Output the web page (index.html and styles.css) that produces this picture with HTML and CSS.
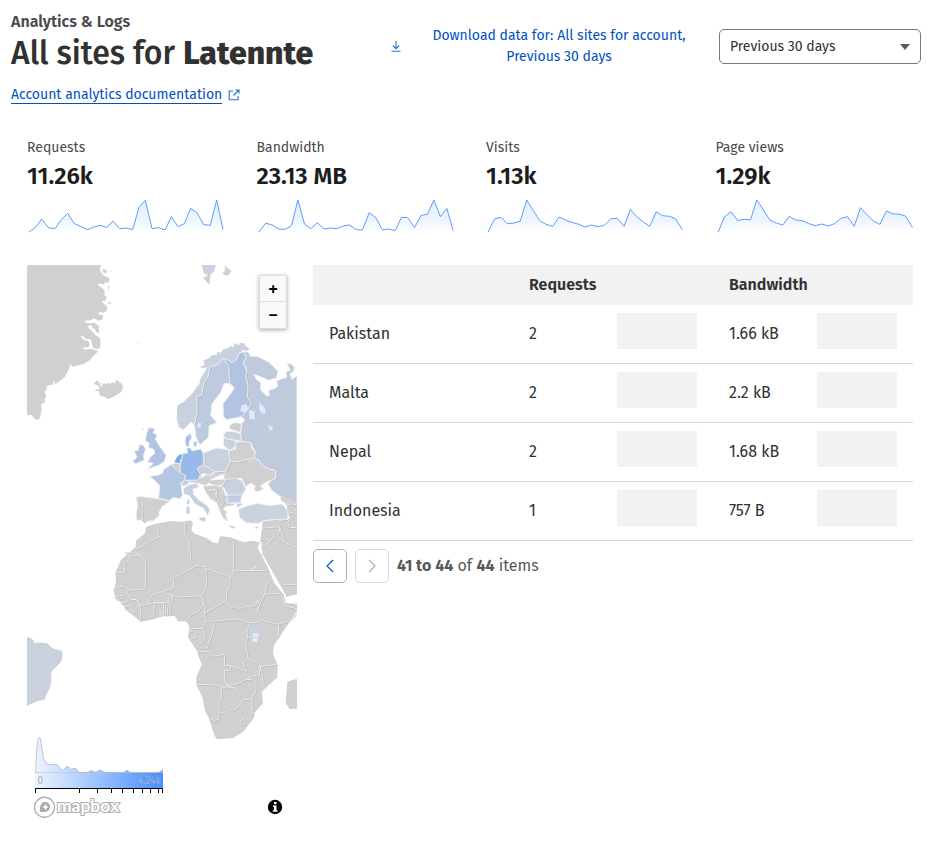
FILE: index.html
```html
<!DOCTYPE html>
<html lang="en">
<head>
<meta charset="utf-8">
<title>Analytics</title>
<link rel="stylesheet" href="styles.css">
</head>
<body>
<header class="top">
  <div class="titles">
    <div class="eyebrow"><span>Analytics &amp; Logs</span></div>
    <h1><span class="site">All sites for </span><b>Latennte</b></h1>
    <a class="doc"><span>Account analytics documentation</span><svg width="12" height="12" viewBox="0 0 12 12"><path d="M5 2H1.2v8.8H10V7M7.3 1H11v3.7M11 1 5.5 6.5"/></svg></a>
  </div>
  <div class="download"><svg width="10" height="11" viewBox="0 0 10 11"><path d="M5 0v7.5M1.8 4.5 5 7.7l3.2-3.2M.5 10.2h9"/></svg><div><span class="l1">Download data for: All sites for account,</span><br><span class="l2">Previous 30 days</span></div></div>
  <div class="select"><span>Previous 30 days</span><i></i></div>
</header>
<main>
  <svg class="defs" width="0" height="0"><defs>
    <linearGradient id="area" x1="0" y1="0" x2="0" y2="1"><stop offset="0" stop-color="#e3eefe"/><stop offset=".6" stop-color="#edf4ff"/><stop offset="1" stop-color="#fff"/></linearGradient>
  </defs></svg>
  <section class="cards">
    <div class="card"><div class="label"><span>Requests</span></div><div class="value"><span>11.26k</span></div>
      <svg viewBox="51 204 600 108"><path class="line" d="M57 306 76 293 95 267 115 293 135 296 154 269 173 250 193 281 212 289 232 299 251 291 270 286 290 292 309 273 329 296 348 294 368 299 387 232 406 211 426 296 445 293 465 300 484 260 504 290 523 281 542 235 561 248 581 284 601 286 620 210 639 299"/></svg></div>
    <div class="card"><div class="label"><span>Bandwidth</span></div><div class="value"><span>23.13 MB</span></div>
      <svg viewBox="35.5 204 600 108"><path class="line" d="M41 307 61 280 80 284 100 297 120 298 139 287 158 210 178 282 197 296 217 278 236 297 256 294 275 296 294 288 313 285 333 299 352 300 372 248 392 263 411 299 430 297 450 302 469 262 488 263 508 293 527 257 547 252 566 210 586 260 605 235 624 302"/></svg></div>
    <div class="card"><div class="label"><span>Visits</span></div><div class="value"><span>1.13k</span></div>
      <svg viewBox="33 204 600 108"><path class="line" d="M39 306 59 266 78 262 97 281 117 279 136 273 155 210 175 242 194 272 213 283 233 289 252 261 272 270 291 277 311 283 330 291 350 285 369 290 388 286 408 266 427 265 447 289 466 238 485 260 505 276 524 289 544 245 562 257 584 259 601 266 622 299"/></svg></div>
    <div class="card"><div class="label"><span>Page views</span></div><div class="value"><span>1.29k</span></div>
      <svg viewBox="32.5 204 600 108"><path class="line" d="M39 306 58 260 78 245 97 271 117 268 136 269 155 210 175 240 194 270 213 279 233 285 252 259 272 270 291 272 311 281 330 287 350 282 369 288 388 281 408 265 427 260 447 289 466 233 485 254 505 273 524 283 544 243 562 251 584 253 601 258 622 293"/></svg></div>
  </section>
  <section class="content">
    <div class="map">
      <svg class="world" width="270" height="560" viewBox="27 265 270 560">
        <g transform="translate(20 260) scale(.33333)" class="g">
          <path d="M21 14H243L240 30 248 45 268 55 266 70 258 66 250 74 240 70 233 75 247 85 254 92 253 105 260 112 256 122 245 123 252 132 262 141 260 153 250 158 238 156 235 162 250 167 248 178 236 182 222 175 212 181 194 182 200 189 213 189 224 188 237 199 237 222 230 217 224 207 215 202 215 195 204 198 208 207 217 214 225 224 241 234V264L228 268 218 262 213 239 205 236 199 238 185 225 183 230 190 239 206 244 209 259 202 262 187 263 195 269 212 266 235 273 210 300 190 312 158 320 150 311 149 323 143 333 135 351 119 364 105 373 102 360 98 374 86 375 78 380 83 384 74 396 80 408 74 415 76 427 63 433 65 450 60 474 52 481 41 474 34 464 21 466ZM247 27 261 30 259 39 250 38ZM265 124 276 130 267 133ZM273 30 275 36 271 34ZM190 250 203 247 206 257 192 260ZM264 76 268 80 265 96Z"/>
          <path d="M221 371 232 360 236 368 242 370 241 378 247 380 248 370 258 372 263 368 270 372 278 367 286 370 288 357 296 365 304 369 309 380 304 396 285 408 265 417 252 410 239 407 237 394 220 391 240 387 236 378ZM350 253 357 245 354 251Z"/>
          <path fill="#b5c8e6" d="M368 508 372 505 372 510ZM384 505 400 503 392 512 382 511Z"/>
        </g>
        <g transform="translate(120 420) scale(.33333)">
          <g fill="#c8d1de">
            <path d="M245-465H288L281-444 272-438 268-406 258-417 249-426 264-435 251-440ZM314-465 322-456 335-448 324-433 314-435 307-440 316-450Z"/>
            <path d="M172-43 184-51 192-55 215-78 228-95 238-108 240-120 248-134 254-145 262-158 250-156 238-158 254-165 250-178 268-186 275-194 290-196 292-205 302-202 311-213 322-215 334-223 338-216 345-231 355-224 360-230 372-231 377-221 389-214 382-208 370-210 358-201 348-180 336-172 327-179 307-185 296-169 285-164 270-160 264-130 250-106 246-75 230-70 231-22 223 15 214 5 190 29 177 21 170-4Z"/>
          </g>
          <path class="b" fill="#becade" d="M270-160 285-164 296-169 307-185 319-171 326-160 330-110 313-110 303-84 276-49 272-14 291 8 267 18 266 51 240 75 228 52 223 15 231-22 230-70 246-75 250-106 264-130Z"/>
          <path class="b" fill="#b2c4e1" d="M307-185 327-179 336-172 348-180 358-201 371-205 379-190 371-171 381-147 377-130 384-105 383-68 394-50 383-30 366-10 320-1 310-12 309-49 331-78 343-96 330-110 326-160 319-171Z"/>
          <path class="b" fill="#bfcadc" d="M371-205 385-204 391-192 415-190 447-173 474-146 469-126 447-119 421-130 402-137 409-122 423-112 421-91 440-72 448-73 446-90 463-94 473-102 470-118 500-128 498-145 511-149 501-169 513-169 524-158 520-145 510-139 516-122 531-132V251L480 229 456 212 444 193 454 180 465 176 468 152 449 148 424 135 418 120 404 116 402 104 408 99 393 68 365 64 362 37 366 10 374 1 366-10 383-30 394-50 383-68 384-105 377-130 381-147 371-171 379-190Z"/>
          <path class="e" d="M307-185 319-171 326-160 330-110M381-147 377-130 384-105 383-68 394-50 383-30 366-10M270-160 264-130 250-106 246-75 230-70 231-22 223 15M362 37 365 64 393 68 408 99M404 116 418 120 424 135 449 148 468 152"/>
          <g fill="#dceaff"><path d="M366-44 379-48 385-32 376-20 360-28ZM387-30 403-26 405-1 389-3ZM419-54 428-43 436-36 436-18 425-20 417-34ZM443 16 457 20 459 31 450 32ZM231 12 244 8 242 21 234 25Z"/></g>
          <g class="g">
            <path class="b" d="M328 16 342 8 364 10 362 38 346 32 330 28ZM342 67 365 64 393 68 395 84 408 99 402 104 404 116 392 124 377 118 359 126 330 122V104L328 93 347 86ZM330 123 359 126 377 118 404 116 418 120 424 135 449 148 468 152 465 176 435 188 421 198 432 207 411 216 402 209 406 198 392 190 378 198 366 175 340 176 316 180 310 170 318 155Z"/>
            <path class="b" d="M271 180 290 170 316 161 319 155 285 156 270 167 264 162 250 170 232 180 208 178 205 187 240 191 256 197 266 189 288 199 307 195 318 177Z"/>
            <path class="b" d="M248 198 290 196 306 200 317 225 322 230 321 248 346 250 340 257 321 259 309 265 322 276 317 283 325 304 310 296 302 280 296 264 290 248 270 236 257 217Z"/>
            <path class="b" d="M48 232 60 229 115 236 151 243 126 260 117 277 118 286 100 303 85 303 74 311 64 300 50 301 48 282 53 259Z"/>
            <path class="b" d="M147 136 166 129 180 131 182 144 181 158Z"/>
            <path d="M325 316 348 321 337 326ZM403 323 417 318 410 327ZM480 232 510 234 522 247 531 251V365H420L424 338 432 304 470 298 510 296 503 279 500 252 485 243Z"/>
            <path class="l" d="M62 247 68 248 66 275 67 300M300 201 307 214 306 238 310 250 301 263M280 207 289 211 291 235 299 244M259 213 282 210 289 230M317 228 300 219M366 175 378 198M497 252 511 254 519 269 531 274M507 243 519 254 531 253M504 282 520 276 531 286M504 298 480 301 477 325 460 343 434 347M504 298 511 322 530 340"/>
          </g>
          <g class="b">
            <path fill="#b0c3e2" d="M88 23 106 26 99 38 112 45 106 57 120 80 139 106 132 126 116 136 82 147 100 130 82 126 92 110 105 99 100 87 85 83 88 70 76 62 79 42Z"/>
            <path fill="#b0c3e2" d="M57 74 71 76 77 89 71 103 72 121 47 131 38 124 51 111 42 94 55 91Z"/>
            <path fill="#b3c7e0" d="M153 134 181 158 196 167 194 181 183 190 185 209 188 225 180 237 160 232 149 242 116 235 119 197 104 181 88 169 116 165 129 159 129 149Z"/>
            <path fill="#76a7ef" d="M162 128 168 114 176 104 189 101 188 115 181 121 181 131Z"/>
            <path fill="#98b9ea" d="M189 100 203 99 200 84 212 84 216 93 241 87 249 96 253 134 232 145 242 163 234 180 194 181 197 167 181 158 180 142 183 123Z"/>
            <path fill="#a6c1e8" d="M197 50 212 40 215 53 208 66 207 81 199 79 195 65ZM220 66 232 63 229 78 222 81Z"/>
            <path fill="#c8d1de" d="M250 99 289 84 326 89 330 123 318 155 285 154 250 134ZM311 52 325 58 345 59 347 75 338 88 325 89 310 76ZM232 147 250 137 285 154 268 166 250 160 243 165Z"/>
            <path fill="#c8d1de" d="M318 34 344 35 362 41 365 64 344 60 325 58 309 48ZM182 192 193 181 208 181 206 193 190 199ZM306 196 319 178 349 176 366 182 378 208 365 226 324 225Z"/>
            <path fill="#c0cfe4" d="M321 226 365 226 362 248 321 249Z"/>
            <path fill="#c5cfdd" d="M190 206 209 194 229 190 237 201 219 208 221 223 237 240 262 257 270 269 263 287 250 265 226 253 207 226 192 223ZM235 293 258 291 254 306 240 301Z"/>
            <path fill="#b3c7e0" d="M203 236 209 240 207 254 200 252Z"/><path fill="#c5cfdd" d="M199 259 210 260 209 282 198 281Z"/>
            <path fill="#c9d2dd" d="M356 267 382 257 413 250 449 257 485 252 504 272 503 297 470 298 434 301 416 310 380 309 358 293ZM351 249 370 250 358 261 349 262Z"/>
          </g>
          <path class="e" d="M330 123 359 126 377 118 404 116M328 90 330 123 318 155 285 154 250 134 232 145 242 163 234 180M252 99 253 134M194 181 197 167 181 158M324 225H365M305 200 319 178 349 176"/>
        </g>
        <path d="M27 637 31 638 34 641 34 643.500 37 642.500 47 643 52 648 58 650 62 651 62.500 656 61 662 56 667 52 671 51 673 51.500 681 50 688 47 693 44.500 700 38 701 33 703 27 706Z" fill="#c9d1dc"/>
        <g transform="translate(100 510) scale(.33333)">
          <path class="g" d="M138 51 155 44 210 33 240 35 273 31 279 43 274 57 281 70 318 83 342 99 354 100 361 78 390 82 432 97 455 92 480 97 473 114 502 169 523 219 552 255 555 279 591 281V303L545 371 521 407 519 432 533 465 532 502 485 545 489 580 464 608 461 625 430 665 399 684 352 688 344 679 327 627 314 600 309 568 289 523 289 501 305 464 289 420 264 382 268 348 258 334 235 335 224 318 190 319 154 329 123 335 102 319 77 300 65 279 46 264 41 240 48 216 46 190 63 149 107 111 109 91 135 70ZM562 516 575 511 591 507V596L569 597 557 580Z"/>
          <path class="g" d="M487 35H591V253L560 261 551 244 528 203 487 132 484 90Z"/>
          <g fill="#c9d2de"><path d="M449 344 477 341 484 356 471 373 443 382 444 362Z"/><path d="M450 604 460 603 458 613 450 611Z"/></g>
          <path fill="#e2effb" d="M459 371 476 369 475 387 457 382Z"/><path fill="#ededed" d="M457 382 475 383 471 398 456 392Z"/>
          <path class="l" d="M171 53 177 81 152 92 134 105 115 115M76 128 115 130 220 205 288 167 272 150 268 97 255 75 254 37M115 130V137H88V151L73 161 73 187H46M136 154V237L85 240 81 233 63 229 48 233M136 154 115 131M268 99 275 91M288 167 317 170 320 226 305 260 291 258 245 261 218 257 202 253 187 245 157 255 141 283 120 287 111 269 90 267 83 248 85 240M220 205V236L187 245M317 178 330 179 390 202 400 193V91M400 181H502M390 202V235L381 238 378 271 395 292 406 290 419 296 435 290 453 291 468 284 474 270 478 286 494 252 501 222 508 217M316 292 313 312 317 334 340 333 374 330 417 327 450 339 482 336 487 323 472 305 470 292M305 260 312 270 308 288 297 303 279 312 258 331M378 271 356 287 314 309M316 292 308 279M417 327 387 289M487 323 491 334 536 342 570 332 591 310M478 286 472 305M494 252 537 250 552 270M552 270 555 286 591 297M536 342V381M443 382 486 381 519 411M443 382 437 403 442 433 445 446 471 456 480 463 478 500 489 516 488 496 480 470 530 463M449 344 440 367 443 382M317 336 309 355 271 356 271 364 282 363 288 382 272 388M309 355 315 389 293 407M345 335 336 375 321 414 293 414M294 425H327L335 438 355 437 373 433 374 466 390 467 417 476 436 482 440 486 434 473 430 455 445 446M374 481H391V467M374 481V514L382 525M289 523H330L371 529 398 524 409 523 440 508 461 510 468 517V542L455 567 434 569 406 534 364 533V568H357V627L344 632 331 625M406 534 384 529 374 514M478 495 461 497 440 508M434 569 406 600 388 600 378 610 363 607 357 604M455 567 458 600 450 604 450 613 460 612M419 637 429 627 437 636 429 646 419 637M216 257 219 268 210 287 210 317M205 278 201 318M196 283 196 316M163 278 190 280 190 316M163 278 161 319M116 286 122 303 120 333M44 259 70 257M47 268 70 266M84 275 62 279M75 290 91 287 98 308 106 304M90 270 110 269 120 287M141 283 163 278 205 278 205 266 218 257M540 55 555 97 591 113M550 223H591M484 90 493 86 510 92 527 76 555 97M490 54 540 50 535 76M563 37 568 52 591 53M484 109 500 107 510 92"/>
          <path fill="none" stroke="#eee" stroke-width="2" d="M178 298 184 307 182 314M450 182 468 168 463 176M486 339 496 350"/>
        </g>
      </svg>
      <div class="zoom"><button>+</button><button>−</button></div>
      <svg class="legend" width="270" height="95" viewBox="27 730 270 95">
        <defs><linearGradient id="scale"><stop offset="0" stop-color="#edf4ff"/><stop offset="1" stop-color="#478eff"/></linearGradient><linearGradient id="hist" gradientUnits="userSpaceOnUse" x1="35" y1="0" x2="163" y2="0"><stop offset="0" stop-color="#edf4ff"/><stop offset="1" stop-color="#478eff"/></linearGradient></defs>
        <path d="M35.500 772.500C36 764 37 737.300 39.200 737.300 41.300 737.300 41.500 749 43.300 757 44.500 762 46 763 48.500 764.300 51 765.300 54 764 56.500 764.400 59 765 60 770 62 770.200 64 770.200 65.500 766.700 67.500 766.700 69.500 766.700 69.500 769.400 71.500 769.400 73 769.400 73.500 768.200 75 768.200 77 768.200 77 772.300 80 772.500H87C89.500 772.300 89.500 770.600 91.300 770.600 93 770.600 93 772.200 95 772.200 97.500 772.200 98 770.300 100 770.300 102 770.300 103 772.500 106 772.500H123C125.500 772.500 125 770.600 127 770.600 129 770.600 128.500 772.500 131 772.500H157C160 772.500 161 771 162.600 769.700V772.800H35.500Z" fill="url(#hist)" stroke="#b0b6bf" stroke-width=".8"/>
        <path d="M35 773H163V788H35Z" fill="url(#scale)"/>
        <text x="37.500" y="784" class="lt">0</text><text x="160.500" y="784" class="lt" text-anchor="end">4.24k</text>
        <path d="M35.500 793V788.500H162.500V793M79.500 789v4M97.500 789v4M111.500 789v4M122.500 789v4M133.500 789v4M142.500 789v4M150.500 789v4M158.500 789v4" fill="none" stroke="#000"/>
        <circle cx="44.500" cy="807.300" r="10" fill="#fff" stroke="#b0b0b0" stroke-width="1.400"/>
        <path d="M40 812C39.500 806 41 802 45 802c3.500 0 5 2.500 5 5 0 4-4 5.500-10 5Z" fill="#aaa"/><path d="m45.500 803.700 1 2.300 2.300 1-2.300 1-1 2.300-1-2.300-2.300-1 2.300-1Z" fill="#fff"/>
        <text x="57" y="812" class="brand" textLength="62" lengthAdjust="spacingAndGlyphs">mapbox</text>
        <circle cx="275" cy="807" r="7.200"/><path d="M274 802h2.500v2.300H274ZM273 805.500h3.500v4.700h1v1.500h-4.700v-1.500h1.200V807H273Z" fill="#fff"/>
      </svg>
    </div>
    <div class="side">
      <div class="row head"><div></div><div><span>Requests</span></div><div><span>Bandwidth</span></div></div>
      <div class="row"><div><span>Pakistan</span></div><div><span>2</span><i></i></div><div><span>1.66 kB</span><i></i></div></div>
      <div class="row"><div><span>Malta</span></div><div><span>2</span><i></i></div><div><span>2.2 kB</span><i></i></div></div>
      <div class="row"><div><span>Nepal</span></div><div><span>2</span><i></i></div><div><span>1.68 kB</span><i></i></div></div>
      <div class="row"><div><span>Indonesia</span></div><div><span>1</span><i></i></div><div><span>757 B</span><i></i></div></div>
      <div class="pager">
        <button><svg width="10" height="14" viewBox="0 0 10 14"><path d="M8 1 2 7l6 6"/></svg></button>
        <button class="off"><svg width="10" height="14" viewBox="0 0 10 14"><path d="m2 1 6 6-6 6"/></svg></button>
        <p><b>41 to 44</b> of <b>44</b> items</p>
      </div>
    </div>
  </section>
</main>
</body>
</html>
```
FILE: styles.css
```css
* { box-sizing: border-box; }
body { margin: 0; background: #fff; color: #313131; font: 16px/24px "Fira Sans", "Noto Sans", "Open Sans", sans-serif; }
.top { display: flex; height: 137px; padding-left: 11px; }
.titles { width: 369px; padding-top: 10px; white-space: nowrap; }
.eyebrow { font-weight: 600; color: #4a4a4a; }
h1 { margin: -1px 0 0; font-size: 32px; line-height: 40px; font-weight: 500; }
h1 b { font-weight: 800; }
.doc { display: flex; align-items: center; gap: 6px; margin-top: 13px; color: #0051c3; font-size: 14px; line-height: 17px; }
.doc span { border-bottom: 1px solid #0051c3; }
svg { display: block; }
.doc svg, .download svg { fill: none; stroke: #2c6fd0; stroke-width: 1.1; }
.download { display: flex; align-items: center; width: 310px; height: 92px; padding-left: 10.5px; gap: 31.5px; color: #0051c3; font-size: 14px; line-height: 21px; text-align: center; white-space: nowrap; }
.download div { width: 254px; }
.download svg { flex: none; }
.select { display: flex; align-items: center; justify-content: space-between; width: 202px; height: 35px; margin: 29px 0 0 29px; padding: 0 10px; border: 1px solid #797979; border-radius: 5px; font-size: 14px; }
.select i { border: 5px solid transparent; border-top: 6px solid #595959; border-bottom: 0; margin-top: 1px; }
.defs { position: absolute; }
.cards { display: grid; grid-template-columns: repeat(4, 229.5px); padding-left: 27px; height: 128px; }
.label { padding-top: 1px; font-size: 14px; line-height: 20px; color: #4a4a4a; }
.value { font-size: 24px; line-height: 36px; font-weight: 600; color: #1d1d1d; }
.card svg { width: 200px; height: 36px; margin-top: 4px; }
.line { fill: url(#area); stroke: #5c9dff; stroke-width: 3; }
.content { display: flex; padding-left: 27px; gap: 16px; }
.map { position: relative; width: 270px; height: 560px; }
.g { fill: #d0d0d0; }
.b { stroke: #f2f4f6; stroke-width: 2.4; stroke-linejoin: round; }
.l, .e { fill: none; stroke: #f2f2f2; stroke-width: 2.8; filter: drop-shadow(1.5px 1px 0 #999); }
.zoom { position: absolute; right: 10px; top: 10px; width: 28px; height: 54px; background: #f9f9f9; box-shadow: 0 1px 4px #aaa; }
.zoom button { display: block; width: 28px; height: 27px; padding: 0; border: 1px solid #ddd; background: #f9f9f9; color: #000; font: 800 16px/24px "Noto Sans", sans-serif; }
.zoom button + button { border-top: 0; }
.legend { position: absolute; left: 0; bottom: 0; }
.lt { font-size: 10px; fill: #a3afc1; }
.brand { font: 700 17px "Lato", sans-serif; fill: #fff; stroke: #b0b0b0; stroke-width: 2.2; paint-order: stroke; }
.side { width: 600px; }
.row { display: grid; grid-template-columns: repeat(3, 200px); height: 59px; border-bottom: 1px solid #d5d7d8; }
.row > div { display: flex; justify-content: space-between; align-items: flex-start; padding: 8px 16px 0; }
.row span { margin-top: 9px; }
.row i { width: 80px; height: 36px; background: #f2f2f2; }
.row.head { height: 40px; background: #f2f2f2; border: 0; font-weight: 600; }
.head > div { padding-top: 0; }
.head span { margin-top: 8px; }
.pager { display: flex; gap: 8px; padding-top: 8px; }
.pager button { display: grid; place-items: center; width: 34px; height: 34px; padding: 0; background: #fff; border: 1px solid #b1b1b1; border-radius: 5px; }
.pager svg { fill: none; stroke: #0051c3; stroke-width: 1.1; }
.pager .off { border-color: #d9d9d9; }
.pager .off svg { stroke: #aaa; }
.pager p { margin: 5px 0 0; color: #595959; }
```
